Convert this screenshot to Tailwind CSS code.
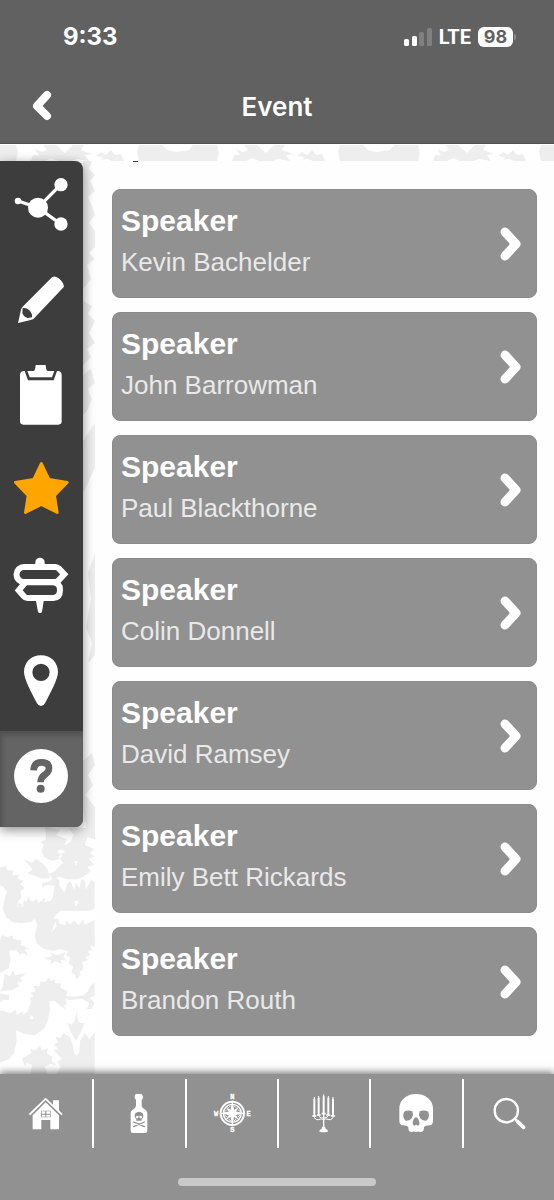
<!DOCTYPE html>
<html lang="en">
<head>
    <meta charset="UTF-8">
    <meta name="viewport" content="width=device-width, initial-scale=1.0">
    <title>Event</title>
    <script src="https://cdn.jsdelivr.net/npm/@tailwindcss/browser@4"></script>
</head>
<body class="bg-white font-['Liberation_Sans',Arial,sans-serif]">
<div class="flex flex-col min-h-screen">

    <header class="bg-[#616161] border-b border-[#505050] text-white font-['Inter',sans-serif]">
        <!-- status bar -->
        <div class="flex items-center justify-between h-[74px] pl-[63px] pr-[38px]">
            <span class="text-2xl font-bold">9:33</span>
            <div class="flex items-center gap-[7px]">
                <svg class="w-7 h-[18px]" viewBox="0 0 28 18" fill="#fff" aria-hidden="true">
                    <rect x="0" y="11" width="5" height="7" rx="1.5"/>
                    <rect x="8" y="8" width="5" height="10" rx="1.5"/>
                    <rect x="15" y="4" width="5" height="14" rx="1.5" fill="#808080"/>
                    <rect x="23" y="0" width="5" height="18" rx="1.5" fill="#808080"/>
                </svg>
                <span class="text-xl leading-6 font-bold font-['Roboto',sans-serif]">LTE</span>
                <div class="flex items-center gap-px">
                    <span class="flex items-center justify-center w-[35px] h-5 rounded-md bg-white text-[#616161] text-lg leading-5 font-bold">98</span>
                    <span class="w-0.5 h-1.5 rounded-r-full bg-[#8a8a8a]"></span>
                </div>
            </div>
        </div>
        <!-- title bar -->
        <div class="grid grid-cols-[83px_1fr_83px] items-center h-[69px] pb-1">
            <button type="button" aria-label="Back" class="flex justify-center">
                <svg class="w-6 h-9" viewBox="0 0 24 36" fill="none" stroke="#fff" stroke-width="8" stroke-linecap="round" stroke-linejoin="round"><path d="M17 6 7 17l10 10"/></svg>
            </button>
            <h1 class="text-center text-[26px] leading-8 font-semibold">Event</h1>
        </div>
    </header>

    <main class="relative flex flex-1 items-start pt-[17px]">
        <!-- dragon wallpaper, top strip -->
        <svg class="absolute top-0 left-0 w-full h-[17px]" aria-hidden="true">
            <defs>
                <pattern id="dragons" width="201" height="18" patternUnits="userSpaceOnUse" x="-66" y="0">
                    <g fill="#eeeeee">
                        <path d="M4 1H27L32 6 41 8 54 6 58 1H82L84 9 82 17Q43 20 4 17L2 8Z"/>
                        <path d="M97 17 99 11 105 11 101 5 108 8 113 6 109 1H122L131 9 139 1H150L147 6 158 10 151 11 155 17 143 15 138 17H124L117 14 111 17Z"/>
                        <path d="M162 12 167 8 172 11 177 6 181 11 187 10 190 17H178L173 15 167 16 169 13Z"/>
                    </g>
                </pattern>
            </defs>
            <rect width="100%" height="17" fill="url(#dragons)"/>
        </svg>
        <!-- dragon wallpaper, strip beside the menu -->
        <svg class="absolute top-[17px] left-[83px] w-3 h-[670px]" viewBox="0 0 12 670" fill="#eeeeee" aria-hidden="true">
            <path d="M0 0H9L6 8 12 14 7 20 12 30 5 36 9 45 12 54 6 62 12 70V86L6 92 12 98 4 104 8 118 0 128ZM0 140 9 145 5 153 12 160 6 172 12 182 4 188 8 196 0 204ZM0 214 8 208 12 222 5 228 9 238 4 250 0 254ZM0 280 12 262V306L5 322 0 332ZM12 392V494L5 502 9 482 3 466 8 438 5 412ZM0 600 9 592 12 604 5 614 10 624 2 634 12 646V670H4L0 650Z"/>
        </svg>
        <!-- dragon wallpaper, under the menu -->
        <svg class="absolute bottom-0 left-0 w-24 h-[254px]" viewBox="0 0 288 762" fill="#eeeeee" aria-hidden="true">
            <path d="M136 20 180 30 168 46 202 58 192 76 212 66 220 44 206 24H286V58L262 52 254 74 282 88 270 100 284 110 266 116 284 136 262 140 272 154 250 170 232 178 200 178 178 170 160 176 146 162 164 154 176 140 190 128 176 112 186 100 196 96 184 88 170 94 188 108 178 118 154 122 132 110 124 90 132 76 122 66 138 58ZM222 124 228 138 234 124Z" fill-rule="evenodd"/>
            <path d="M70 118 96 128 108 116 128 130 144 150 150 174 128 176 98 166 82 160 98 148Z"/>
            <path d="M0 144 16 136 22 150 42 152 36 164 58 166 52 176 72 182 60 192 74 204 62 214 64 232 54 246 56 262 68 262 72 240 80 246 84 232 96 246 110 236 116 248 138 232 132 246 150 244 158 234 164 196 134 196 128 206 126 190 150 184 160 170 178 180 178 198 194 218 202 190 212 184 222 210 228 188 238 206 244 178 254 184 258 210 272 180 284 186V266L270 272H182L168 284 160 296 174 296 178 310 196 316 200 300 210 314 222 302 236 316 250 298 254 314 284 300V382L270 376 276 390 262 394 272 404 256 412 264 420 246 426 250 446 238 456 242 464 228 480 226 464 214 458 220 440 206 430 210 412 196 404 206 394 180 388 160 392 130 386 110 370 104 346 112 314 104 296 94 306 62 310 38 306 18 292 8 268 14 238 20 214 10 200 0 196ZM54 248 52 260 64 262 66 254ZM222 242 228 262 236 244ZM166 304 154 338 170 318Z" fill-rule="evenodd"/>
            <path d="M0 360 6 344 22 352 40 346 38 356 66 362 62 374 88 386 74 388 84 406 66 398 62 406 48 390 26 392 32 420 26 444 0 460Z"/>
            <path d="M132 416 156 408 150 398 172 406 196 396 190 412 202 422 182 420 186 432 166 424 150 434 154 420Z"/>
            <path d="M8 500 14 462 30 468 40 450 44 466 80 460 60 474 68 484 52 488 58 498 36 510 0 514Z"/>
            <path d="M0 520 28 526 26 540 10 540 0 548ZM0 572 16 574 30 580 46 570 52 584 70 572 68 584 84 574 88 560 94 544 88 534 100 530 92 518 108 514 100 498 118 498 122 484 136 486 146 472 154 484 166 478 162 490 184 490 180 502 202 514 198 528 224 530 250 526 264 514 270 500 284 486V526L270 534 284 548 274 568 260 566 268 550 246 536 212 540 196 538 200 550 190 558 202 570 184 560 164 542 148 544 150 566 144 600 132 626 104 646 72 642 48 630 50 664 42 700 26 718 0 728ZM92 586 90 596 98 598 102 592Z" fill-rule="evenodd"/>
            <path d="M230 576 234 602 242 610 254 608 244 634 228 662 212 636 202 608 216 614 224 602Z"/>
            <path d="M166 650 182 654 190 640 210 652 218 674 222 698 230 708 238 696 240 664 254 640 268 656 284 638V762H170L182 740 172 726 186 716 160 690 176 688 160 672 174 668Z"/>
            <path d="M66 716 94 698 90 686 106 692 120 676 126 692 144 684 140 700 158 710 154 722 170 736 150 732 134 740 142 762H92L96 734 80 728 76 740Z"/>
        </svg>

        <!-- tool menu -->
        <nav aria-label="Tools" class="relative z-10 w-[83px] overflow-hidden shrink-0 rounded-r-lg bg-[#3d3d3d] shadow-[0_3px_12px_rgba(0,0,0,0.45)]">
            <button type="button" aria-label="Share" class="flex justify-center w-full pt-4 pb-6">
                <svg class="size-[55px] overflow-visible" viewBox="42 81 165 165" fill="#fff" stroke="#fff">
                    <path d="M54 153 114 173 182 104M114 173 182 222" fill="none" stroke-width="10"/>
                    <g stroke="none"><circle cx="54" cy="153" r="10"/><circle cx="114" cy="173" r="30"/><circle cx="183" cy="104" r="20"/><circle cx="183" cy="222" r="20"/></g>
                </svg>
            </button>
            <button type="button" aria-label="Notes" class="flex justify-center w-full pt-4 pb-6">
                <svg class="size-[55px] overflow-visible" viewBox="42 366 165 165" fill="#fff">
                    <path d="M156 382Q163 376 175 384 190 395 192 410L101 506Q98 509 92 510L54 519 63 479Q64 474 68 470Z"/>
                    <path d="M68 474Q80 472 88 481 98 491 96 502L84 504Q72 502 67 490Z" fill="#3d3d3d"/>
                </svg>
            </button>
            <button type="button" aria-label="Clipboard" class="flex justify-center w-full pt-4 pb-6">
                <svg class="size-[55px] overflow-visible" viewBox="42 51 165 165" fill="#fff">
                    <path d="M70 63H74L84 91H161L171 63H175Q185 65 185 75V214Q185 224 175 224H70Q60 224 60 214V75Q60 65 70 63Z"/>
                    <path d="M82 63H101Q106 62 107 45H137Q138 62 143 63H163L156 82H89Z"/>
                </svg>
            </button>
            <button type="button" aria-label="Favorite" class="flex justify-center w-full pt-4 pb-6">
                <svg class="size-[55px] overflow-visible" viewBox="42 336 165 165" fill="#ffa500" stroke="#ffa500" stroke-width="8" stroke-linejoin="round">
                    <path d="M124 340 147 388 202 397 164 437 172 488 124 464 76 488 84 437 46 397 101 388Z"/>
                </svg>
            </button>
            <button type="button" aria-label="Directions" class="flex justify-center w-full pt-4 pb-6">
                <svg class="size-[55px] overflow-visible" viewBox="42 51 165 165">
                    <path d="M106 76V67A14 14 0 0 1 134 67V76ZM107 178H132L126 215Q125 219 120 219T114 215Z" fill="#fff"/>
                    <g fill="none" stroke="#fff" stroke-width="18">
                        <path d="M72 81H166Q172 81 177 86L193 103 177 120Q172 126 166 126H72A22 22 0 0 1 72 81Z"/>
                        <path d="M82 127H160Q180 129 180 150 180 173 160 174H82Q76 174 71 168L56 151 71 133Q76 127 82 127Z"/>
                    </g>
                </svg>
            </button>
            <button type="button" aria-label="Map" class="flex justify-center w-full pt-4 pb-6">
                <svg class="size-[55px] overflow-visible" viewBox="42 336 165 165" fill="#fff">
                    <path fill-rule="evenodd" d="M123 346C153 346 174 368 174 396 174 418 150 460 135 490Q131 498 123 498T111 490C96 460 72 418 72 396 72 368 93 346 123 346ZM123 371A26 26 0 1 0 123 423 26 26 0 1 0 123 371Z"/>
                </svg>
            </button>
            <button type="button" aria-label="Help" class="flex justify-center w-full pt-4 pb-6 border-t border-[#525252] bg-[#646464] shadow-[inset_2px_3px_5px_rgba(0,0,0,0.2)]">
                <svg class="size-[55px] overflow-visible" viewBox="42 624 165 165">
                    <circle cx="123" cy="708" r="81" fill="#fff"/>
                    <path d="M101 691Q102 667 124 667 147 667 147 685 147 696 135 704 122 712 122 727" fill="none" stroke="#646464" stroke-width="20"/>
                    <circle cx="122" cy="746" r="12" fill="#646464"/>
                </svg>
            </button>
        </nav>

        <!-- speaker list -->
        <section aria-label="Speakers" class="relative flex-1 self-stretch ml-3 px-[17px] pt-7 pb-9 bg-[#fefefe]">
            <span class="absolute top-0 left-[38px] w-[5px] h-px bg-gray-700"></span>
            <ul class="flex flex-col gap-3.5">
                <li>
                    <a href="#" class="flex items-center justify-between pl-2 pr-3.5 rounded-lg border border-[#8b8b8b] bg-[#919191]">
                        <div class="pt-[11px] pb-3.5">
                            <h2 class="text-3xl leading-10 font-bold text-white">Speaker</h2>
                            <p class="text-[26px] leading-[42px] text-[#e9e9e9]">Kevin Bachelder</p>
                        </div>
                        <svg class="w-6 h-9" viewBox="0 0 24 36" fill="none" stroke="#fff" stroke-width="9" stroke-linecap="round" stroke-linejoin="round"><path d="M7 6 18 18 7 30"/></svg>
                    </a>
                </li>
                <li>
                    <a href="#" class="flex items-center justify-between pl-2 pr-3.5 rounded-lg border border-[#8b8b8b] bg-[#919191]">
                        <div class="pt-[11px] pb-3.5">
                            <h2 class="text-3xl leading-10 font-bold text-white">Speaker</h2>
                            <p class="text-[26px] leading-[42px] text-[#e9e9e9]">John Barrowman</p>
                        </div>
                        <svg class="w-6 h-9" viewBox="0 0 24 36" fill="none" stroke="#fff" stroke-width="9" stroke-linecap="round" stroke-linejoin="round"><path d="M7 6 18 18 7 30"/></svg>
                    </a>
                </li>
                <li>
                    <a href="#" class="flex items-center justify-between pl-2 pr-3.5 rounded-lg border border-[#8b8b8b] bg-[#919191]">
                        <div class="pt-[11px] pb-3.5">
                            <h2 class="text-3xl leading-10 font-bold text-white">Speaker</h2>
                            <p class="text-[26px] leading-[42px] text-[#e9e9e9]">Paul Blackthorne</p>
                        </div>
                        <svg class="w-6 h-9" viewBox="0 0 24 36" fill="none" stroke="#fff" stroke-width="9" stroke-linecap="round" stroke-linejoin="round"><path d="M7 6 18 18 7 30"/></svg>
                    </a>
                </li>
                <li>
                    <a href="#" class="flex items-center justify-between pl-2 pr-3.5 rounded-lg border border-[#8b8b8b] bg-[#919191]">
                        <div class="pt-[11px] pb-3.5">
                            <h2 class="text-3xl leading-10 font-bold text-white">Speaker</h2>
                            <p class="text-[26px] leading-[42px] text-[#e9e9e9]">Colin Donnell</p>
                        </div>
                        <svg class="w-6 h-9" viewBox="0 0 24 36" fill="none" stroke="#fff" stroke-width="9" stroke-linecap="round" stroke-linejoin="round"><path d="M7 6 18 18 7 30"/></svg>
                    </a>
                </li>
                <li>
                    <a href="#" class="flex items-center justify-between pl-2 pr-3.5 rounded-lg border border-[#8b8b8b] bg-[#919191]">
                        <div class="pt-[11px] pb-3.5">
                            <h2 class="text-3xl leading-10 font-bold text-white">Speaker</h2>
                            <p class="text-[26px] leading-[42px] text-[#e9e9e9]">David Ramsey</p>
                        </div>
                        <svg class="w-6 h-9" viewBox="0 0 24 36" fill="none" stroke="#fff" stroke-width="9" stroke-linecap="round" stroke-linejoin="round"><path d="M7 6 18 18 7 30"/></svg>
                    </a>
                </li>
                <li>
                    <a href="#" class="flex items-center justify-between pl-2 pr-3.5 rounded-lg border border-[#8b8b8b] bg-[#919191]">
                        <div class="pt-[11px] pb-3.5">
                            <h2 class="text-3xl leading-10 font-bold text-white">Speaker</h2>
                            <p class="text-[26px] leading-[42px] text-[#e9e9e9]">Emily Bett Rickards</p>
                        </div>
                        <svg class="w-6 h-9" viewBox="0 0 24 36" fill="none" stroke="#fff" stroke-width="9" stroke-linecap="round" stroke-linejoin="round"><path d="M7 6 18 18 7 30"/></svg>
                    </a>
                </li>
                <li>
                    <a href="#" class="flex items-center justify-between pl-2 pr-3.5 rounded-lg border border-[#8b8b8b] bg-[#919191]">
                        <div class="pt-[11px] pb-3.5">
                            <h2 class="text-3xl leading-10 font-bold text-white">Speaker</h2>
                            <p class="text-[26px] leading-[42px] text-[#e9e9e9]">Brandon Routh</p>
                        </div>
                        <svg class="w-6 h-9" viewBox="0 0 24 36" fill="none" stroke="#fff" stroke-width="9" stroke-linecap="round" stroke-linejoin="round"><path d="M7 6 18 18 7 30"/></svg>
                    </a>
                </li>
            </ul>
        </section>
    </main>

    <!-- tab bar -->
    <footer class="relative z-10 pt-[5px] pb-3.5 bg-[#919191] shadow-[0_-2px_7px_rgba(0,0,0,0.5)]">
        <nav aria-label="Main" class="grid grid-cols-6 h-[69px]">
            <a href="#" aria-label="Home" class="flex items-center justify-center">
                <svg class="size-10" viewBox="78 102 120 120" fill="#fff">
                    <path d="M137 113 159 134V121H177V151L188 162 184 166 137 120 91 166 86 162Z"/>
                    <path fill-rule="evenodd" d="M137 127 177 166V208H151V180H124V208H98V166ZM123 152V172H152V152Z"/>
                    <path d="M125 154H136V161H125ZM139 154H150V161H139ZM125 164H136V170H125ZM139 164H150V170H139Z"/>
                </svg>
            </a>
            <a href="#" aria-label="Potions" class="flex items-center justify-center border-l-2 border-white">
                <svg class="size-10" viewBox="355 102 120 120" fill="#fff">
                    <path d="M405 102H423Q428 107 427 115L423 119V137Q424 144 434 149 440 153 440 159V212Q440 219 433 219H397Q390 219 390 212V159Q390 153 396 149 406 144 406 137V119L402 115Q401 107 405 102Z"/>
                    <path fill="#919191" fill-rule="evenodd" d="M415 155Q428 156 428 168 428 174 423 176V182H407V176Q402 174 402 168 402 156 415 155ZM410 167A4 4 0 1 0 410 175 4 4 0 1 0 410 167ZM420 167A4 4 0 1 0 420 175 4 4 0 1 0 420 167Z"/>
                    <path d="M399 186 431 200M431 186 399 200" stroke="#919191" stroke-width="4" stroke-linecap="round"/>
                </svg>
            </a>
            <a href="#" aria-label="Explore" class="flex items-center justify-center border-l-2 border-white">
                <svg class="size-10 overflow-visible" viewBox="633 102 120 120" fill="#fff">
                    <circle cx="694" cy="160" r="35" fill="none" stroke="#fff" stroke-width="6"/>
                    <circle cx="694" cy="160" r="27" fill="none" stroke="#fff" stroke-width="4"/>
                    <path d="M694 119 700 154 735 160 700 166 694 201 688 166 653 160 688 154Z"/>
                    <path d="M674 140 693 152 694 160 686 159ZM714 140 702 159 694 160 695 152ZM714 180 695 168 694 160 702 161ZM674 180 686 161 694 160 693 168Z"/>
                    <path d="M677 149 671 155M683 143 689 137M711 149 717 155M705 143 699 137M677 171 671 165M683 177 689 183M711 171 717 165M705 177 699 183" stroke="#fff" stroke-width="3"/>
                    <g font-family="Liberation Mono, monospace" font-weight="700" font-size="21" text-anchor="middle" stroke="#fff">
                        <text x="694" y="117">N</text>
                        <text x="645" y="168">W</text>
                        <text x="743" y="168">E</text>
                        <text x="694" y="217">S</text>
                    </g>
                </svg>
            </a>
            <a href="#" aria-label="Dining" class="flex items-center justify-center border-l-2 border-white">
                <svg class="size-10" viewBox="87 102 120 120" fill="none" stroke="#fff">
                    <path d="M118 116V168M131 113V165M146 109V162M160 113V165M174 116V168" stroke-width="6"/>
                    <path d="M118 111V118M131 108V116M146 103V112M160 108V116M174 111V118" stroke-width="3"/>
                    <path d="M112 168H124M126 165H137M140 161H152M154 165H166M168 168H180" stroke-width="5"/>
                    <path d="M118 168Q118 180 130 179 142 174 146 179 150 174 162 179 174 180 174 168M131 165Q132 174 146 174 159 174 160 165" stroke-width="3"/>
                    <path d="M146 160V206" stroke-width="4"/>
                    <path d="M142 200H150L152 206Q160 209 159 215 147 219 133 215 132 209 140 206Z" fill="#fff" stroke="none"/>
                </svg>
            </a>
            <a href="#" aria-label="Guests" class="flex items-center justify-center border-l-2 border-white">
                <svg class="size-10" viewBox="365 102 120 120">
                    <path d="M425 102C455 102 476 121 476 145V182Q476 194 466 196 452 196 449 202 450 216 438 216 432 213 425 216 418 213 412 216 401 216 402 202 399 196 385 196 375 194 375 182V145C375 121 396 102 425 102Z" fill="#fff"/>
                    <g fill="#919191">
                        <path d="M389 155Q402 149 414 154 418 164 413 174 405 184 394 182 383 173 389 155ZM462 155Q449 149 436 154 432 164 437 174 445 184 456 182 467 173 462 155Z"/>
                        <path d="M425 171Q430 172 434 184 438 194 431 197L425 194 420 197Q413 194 416 184 420 172 425 171Z"/>
                    </g>
                </svg>
            </a>
            <a href="#" aria-label="Search" class="flex items-center justify-center border-l-2 border-white">
                <svg class="size-10" viewBox="642 102 120 120" fill="none" stroke="#fff" stroke-linecap="round">
                    <circle cx="694" cy="152" r="35" stroke-width="7"/>
                    <path d="M720 177 727 184" stroke-width="7"/>
                    <path d="M727 184 746 202" stroke-width="11"/>
                </svg>
            </a>
        </nav>
        <div class="w-[198px] h-2 mx-auto mt-[30px] rounded-full bg-[#c9c9c9]"></div>
    </footer>
</div>
</body>
</html>
